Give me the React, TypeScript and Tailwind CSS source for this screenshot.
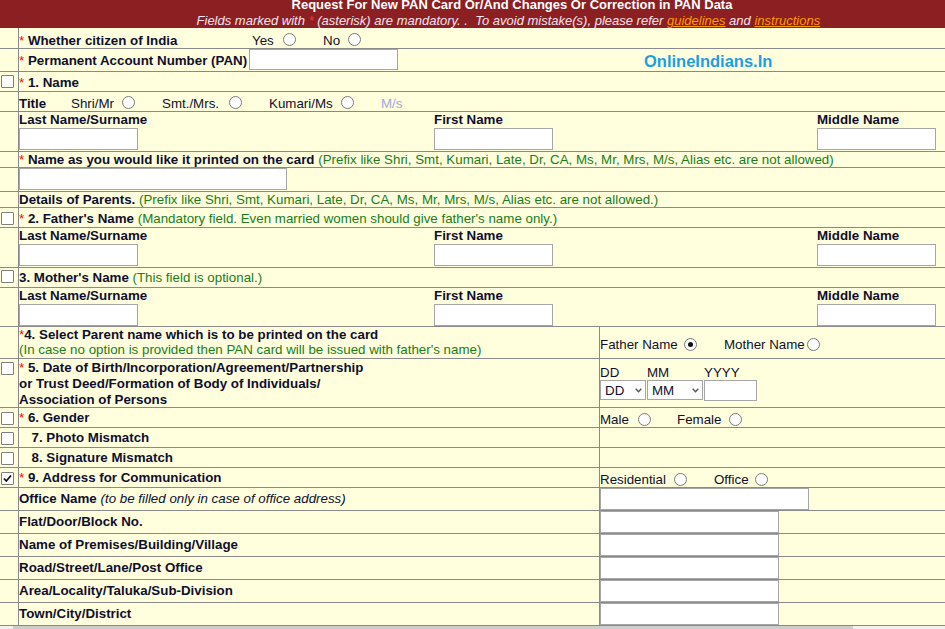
import React from "react";
import { clsx } from "clsx";

const line = "border-[#8a8a8a]";

function Ast() {
  return <span className="font-normal text-[#ff0000]">*</span>;
}

function Box({ checked, className }: { checked?: boolean; className?: string }) {
  return (
    <span
      className={clsx(
        "ml-[1px] flex h-[13px] w-[13px] items-center justify-center rounded-[1px] border border-[#7f7f7f] bg-white",
        className
      )}
    >
      {checked && (
        <svg width="11" height="11" viewBox="0 0 11 11">
          <path d="M2 5.5 L4.3 8 L9 2.5" fill="none" stroke="#111" strokeWidth="1.8" />
        </svg>
      )}
    </span>
  );
}

function Radio({ checked, className }: { checked?: boolean; className?: string }) {
  return (
    <span
      className={clsx(
        "relative block h-[13px] w-[13px] shrink-0 rounded-full border border-[#7a7a7a] bg-white",
        className
      )}
    >
      {checked && <span className="absolute left-[3px] top-[3px] h-[5px] w-[5px] rounded-full bg-[#111]" />}
    </span>
  );
}

function Field({ className }: { className: string }) {
  return <input readOnly className={clsx("block border border-[#a6a6a6] bg-white outline-none", className)} />;
}

function Select({ label, className }: { label: string; className: string }) {
  return (
    <div
      className={clsx(
        "flex h-[20px] items-center justify-between border border-[#a6a6a6] bg-white pl-[4px] pr-[3px] font-normal",
        className
      )}
    >
      <span>{label}</span>
      <svg width="7" height="5" viewBox="0 0 7 5">
        <path d="M0.7 0.8 L3.5 3.8 L6.3 0.8" fill="none" stroke="#555" strokeWidth="1.4" />
      </svg>
    </div>
  );
}

function Row({
  className,
  left,
  children,
}: {
  className: string;
  left?: React.ReactNode;
  children: React.ReactNode;
}) {
  return (
    <div className={clsx("flex border-b", line, className)}>
      <div className={clsx("w-[19px] shrink-0 border-r", line)}>{left}</div>
      {children}
    </div>
  );
}

function NameBlock({ className }: { className: string }) {
  return (
    <Row className={className}>
      <div className="flex font-bold">
        <div className="w-[415px]">
          <div>Last Name/Surname</div>
          <Field className="h-[22px] w-[119px]" />
        </div>
        <div className="w-[383px]">
          <div>First Name</div>
          <Field className="h-[22px] w-[119px]" />
        </div>
        <div>
          <div>Middle Name</div>
          <Field className="h-[22px] w-[119px]" />
        </div>
      </div>
    </Row>
  );
}

function AddressRow({ label, note, input }: { label: string; note?: string; input: string }) {
  return (
    <Row className="h-[23px]">
      <div className={clsx("flex w-[581px] shrink-0 items-center border-r font-bold", line)}>
        <span>
          {label}
          {note && <span className="font-normal italic"> {note}</span>}
        </span>
      </div>
      <Field className={clsx("h-[22px]", input)} />
    </Row>
  );
}

const green = "text-[#1a7d1a] font-normal";

export default function App() {
  return (
    <div className="flex h-[629px] w-[945px] flex-col overflow-hidden bg-[#ffffdd] font-['Liberation_Sans','Arial',sans-serif] text-[13.33px] leading-4 text-[#0f0f2d]">
      <div className="relative w-[1024px] shrink-0">
        {/* Header */}
        <div className="h-[28px] overflow-hidden bg-[#8b1f22] text-center text-[13px]">
          <div className="-mt-[3px] leading-4">
            <div className="font-bold text-white">
              Request For New PAN Card Or/And Changes Or Correction in PAN Data
            </div>
            <div className="italic text-[#f3e3ef]">
              Fields marked with <span className="text-[#ff3030]">*</span> (asterisk) are mandatory.{"\u00a0"}.
              {"\u00a0 "}To avoid mistake(s), please refer{" "}
              <span className="text-[#ff9900] underline">guidelines</span> and{" "}
              <span className="text-[#ff9900] underline">instructions</span>{" "}
              <span className="text-[#333]">.</span>
            </div>
          </div>
        </div>

        {/* Citizen */}
        <Row className="h-[21px]">
          <div className="flex items-start pt-[5px]">
            <span className="w-[233px] font-bold">
              <Ast /> Whether citizen of India
            </span>
            <span className="w-[31px]">Yes</span>
            <Radio />
            <span className="w-[27px]" />
            <span className="w-[25px]">No</span>
            <Radio />
          </div>
        </Row>

        {/* PAN */}
        <Row className="h-[23px]">
          <div className="flex items-start">
            <span className="w-[230px] pt-[4px] font-bold">
              <Ast /> Permanent Account Number (PAN)
            </span>
            <Field className="h-[21px] w-[149px]" />
          </div>
        </Row>

        {/* 1. Name */}
        <Row className="h-[20px]" left={<Box className="mt-[3px]" />}>
          <div className="pt-[3px] font-bold">
            <Ast /> 1. Name
          </div>
        </Row>

        {/* Title */}
        <Row className="h-[20px]">
          <div className="flex items-start pt-[4px]">
            <span className="w-[52px] font-bold">Title</span>
            <span className="w-[51px]">Shri/Mr</span>
            <Radio />
            <span className="w-[27px]" />
            <span className="w-[67px]">Smt./Mrs.</span>
            <Radio />
            <span className="w-[27px]" />
            <span className="w-[72px]">Kumari/Ms</span>
            <Radio />
            <span className="w-[27px]" />
            <span className="text-[#a6a6d8]">M/s</span>
          </div>
        </Row>

        <NameBlock className="h-[40px]" />

        {/* Printed name */}
        <Row className="h-[16px]">
          <div className="leading-[15px]">
            <span className="font-bold">
              <Ast /> Name as you would like it printed on the card
            </span>{" "}
            <span className={green}>
              (Prefix like Shri, Smt, Kumari, Late, Dr, CA, Ms, Mr, Mrs, M/s, Alias etc. are not allowed)
            </span>
          </div>
        </Row>
        <Row className="h-[24px]">
          <Field className="h-[22px] w-[268px]" />
        </Row>

        {/* Parents */}
        <Row className="h-[16px]">
          <div className="leading-[15px]">
            <span className="font-bold">Details of Parents.</span>{" "}
            <span className={green}>
              (Prefix like Shri, Smt, Kumari, Late, Dr, CA, Ms, Mr, Mrs, M/s, Alias etc. are not allowed.)
            </span>
          </div>
        </Row>
        <Row className="h-[20px]" left={<Box className="mt-[4px]" />}>
          <div className="pt-[3px]">
            <span className="font-bold">
              <Ast /> 2. Father's Name
            </span>{" "}
            <span className={green}>(Mandatory field. Even married women should give father's name only.)</span>
          </div>
        </Row>
        <NameBlock className="h-[40px]" />
        <Row className="h-[20px]" left={<Box className="mt-[2px]" />}>
          <div className="pt-[2px]">
            <span className="font-bold">3. Mother's Name</span>{" "}
            <span className={green}>(This field is optional.)</span>
          </div>
        </Row>
        <NameBlock className="h-[39px]" />

        {/* 4. Parent name on card */}
        <Row className="h-[32px]">
          <div className={clsx("w-[581px] shrink-0 border-r leading-[15px]", line)}>
            <div className="font-bold">
              <Ast />
              4. Select Parent name which is to be printed on the card
            </div>
            <div className={green}>(In case no option is provided then PAN card will be issued with father's name)</div>
          </div>
          <div className="flex items-start pt-[10px]">
            <span className="w-[84px]">Father Name</span>
            <Radio checked className="mt-[1px]" />
            <span className="w-[27px]" />
            <span className="w-[83px]">Mother Name</span>
            <Radio className="mt-[1px]" />
          </div>
        </Row>

        {/* 5. Date of birth */}
        <Row className="h-[49px]" left={<Box className="mt-[3px]" />}>
          <div className={clsx("w-[581px] shrink-0 border-r pt-[1px] font-bold", line)}>
            <Ast /> 5. Date of Birth/Incorporation/Agreement/Partnership
            <br />
            or Trust Deed/Formation of Body of Individuals/
            <br />
            Association of Persons
          </div>
          <div className="flex flex-col pt-[6px] leading-[15px]">
            <div className="flex">
              <span className="w-[47px]">DD</span>
              <span className="w-[57px]">MM</span>
              <span>YYYY</span>
            </div>
            <div className="flex items-start gap-[1px]">
              <Select label="DD" className="w-[46px]" />
              <Select label="MM" className="w-[56px]" />
              <Field className="h-[21px] w-[53px]" />
            </div>
          </div>
        </Row>

        {/* 6. Gender */}
        <Row className="h-[20px]" left={<Box className="mt-[4px]" />}>
          <div className={clsx("w-[581px] shrink-0 border-r pt-[2px] font-bold", line)}>
            <Ast /> 6. Gender
          </div>
          <div className="flex items-start pt-[4px]">
            <span className="w-[38px]">Male</span>
            <Radio className="mt-[1px]" />
            <span className="w-[26px]" />
            <span className="w-[52px]">Female</span>
            <Radio className="mt-[1px]" />
          </div>
        </Row>

        <Row className="h-[20px]" left={<Box className="mt-[4px]" />}>
          <div className={clsx("w-[581px] shrink-0 border-r pl-[12.5px] pt-[2px] font-bold", line)}>
            7. Photo Mismatch
          </div>
        </Row>
        <Row className="h-[20px]" left={<Box className="mt-[4px]" />}>
          <div className={clsx("w-[581px] shrink-0 border-r pl-[12.5px] pt-[2px] font-bold", line)}>
            8. Signature Mismatch
          </div>
        </Row>

        {/* 9. Address */}
        <Row className="h-[20px]" left={<Box checked className="mt-[4px]" />}>
          <div className={clsx("w-[581px] shrink-0 border-r pt-[2px] font-bold", line)}>
            <Ast /> 9. Address for Communication
          </div>
          <div className="flex items-start pt-[4px]">
            <span className="w-[74px]">Residential</span>
            <Radio className="mt-[1px]" />
            <span className="w-[27px]" />
            <span className="w-[41px]">Office</span>
            <Radio className="mt-[1px]" />
          </div>
        </Row>

        <AddressRow label="Office Name" note="(to be filled only in case of office address)" input="w-[209px]" />
        <AddressRow label="Flat/Door/Block No." input="w-[179px]" />
        <AddressRow label="Name of Premises/Building/Village" input="w-[179px]" />
        <AddressRow label="Road/Street/Lane/Post Office" input="w-[179px]" />
        <AddressRow label="Area/Locality/Taluka/Sub-Division" input="w-[179px]" />
        <AddressRow label="Town/City/District" input="w-[179px]" />

        {/* watermark */}
        <div className="absolute left-[644px] top-[53px] text-[16.5px] font-bold leading-[16.5px] text-[#1b9fe2]">
          OnlineIndians.In
        </div>
      </div>

      {/* horizontal scrollbar edge */}
      <div className="flex h-[3px] shrink-0">
        <div className="w-[13px] bg-[#f0f0f0]" />
        <div className="w-[840px] bg-[#cdcdcd]" />
        <div className="flex-1 bg-[#f0f0f0]" />
      </div>
    </div>
  );
}
